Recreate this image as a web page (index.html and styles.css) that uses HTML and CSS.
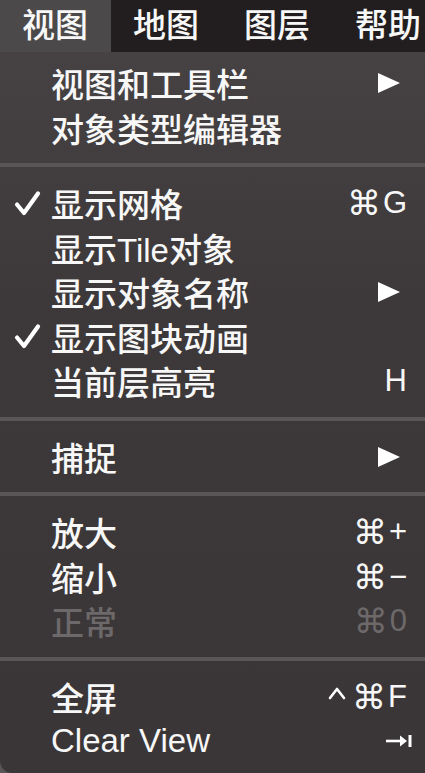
FILE: index.html
```html
<!DOCTYPE html>
<html lang="zh-CN">
<head>
<meta charset="utf-8">
<title>视图菜单</title>
<link rel="stylesheet" href="styles.css">
</head>
<body>
<div class="screen">
  <nav class="menubar">
    <div class="bar-item active">视图</div>
    <div class="bar-item">地图</div>
    <div class="bar-item">图层</div>
    <div class="bar-item">帮助</div>
  </nav>
  <div class="menu">
    <div class="row"><span class="check"></span><span class="label">视图和工具栏</span><span class="key"><svg class="arrow" width="22" height="20" viewBox="0 0 22 20"><polygon points="0,0 22,10 0,20" fill="#fff"/></svg></span></div>
    <div class="row"><span class="check"></span><span class="label">对象类型编辑器</span><span class="key"></span></div>
    <div class="sep"></div>
    <div class="row"><span class="check"><svg width="27" height="27" viewBox="0 0 27 27"><path d="M3 14.5 L10 23 L24 3.5" fill="none" stroke="#fff" stroke-width="4.2" stroke-linecap="round" stroke-linejoin="round"/></svg></span><span class="label">显示网格</span><span class="key"><span class="cmd">⌘</span>G</span></div>
    <div class="row"><span class="check"></span><span class="label">显示Tile对象</span><span class="key"></span></div>
    <div class="row"><span class="check"></span><span class="label">显示对象名称</span><span class="key"><svg class="arrow" width="22" height="20" viewBox="0 0 22 20"><polygon points="0,0 22,10 0,20" fill="#fff"/></svg></span></div>
    <div class="row"><span class="check"><svg width="27" height="27" viewBox="0 0 27 27"><path d="M3 14.5 L10 23 L24 3.5" fill="none" stroke="#fff" stroke-width="4.2" stroke-linecap="round" stroke-linejoin="round"/></svg></span><span class="label">显示图块动画</span><span class="key"></span></div>
    <div class="row"><span class="check"></span><span class="label">当前层高亮</span><span class="key">H</span></div>
    <div class="sep"></div>
    <div class="row"><span class="check"></span><span class="label">捕捉</span><span class="key"><svg class="arrow" width="22" height="20" viewBox="0 0 22 20"><polygon points="0,0 22,10 0,20" fill="#fff"/></svg></span></div>
    <div class="sep"></div>
    <div class="row"><span class="check"></span><span class="label">放大</span><span class="key"><span class="cmd">⌘</span>+</span></div>
    <div class="row"><span class="check"></span><span class="label">缩小</span><span class="key"><span class="cmd">⌘</span>−</span></div>
    <div class="row disabled"><span class="check"></span><span class="label">正常</span><span class="key"><span class="cmd">⌘</span>0</span></div>
    <div class="sep"></div>
    <div class="row"><span class="check"></span><span class="label">全屏</span><span class="key"><svg class="ctrl" width="18" height="14" viewBox="0 0 18 14"><path d="M2 12 L9 3 L16 12" fill="none" stroke="#fff" stroke-width="2.6" stroke-linecap="round" stroke-linejoin="round"/></svg><span class="cmd">⌘</span>F</span></div>
    <div class="row"><span class="check"></span><span class="label">Clear View</span><span class="key"><svg class="tab" width="27" height="14" viewBox="0 0 27 14"><path d="M0 7 H18" stroke="#fff" stroke-width="2.6"/><polygon points="14,1.5 21,7 14,12.5" fill="#fff"/><rect x="22.5" y="1" width="3" height="12" fill="#fff"/></svg></span></div>
  </div>
</div>
</body>
</html>
```
FILE: styles.css
```css
html, body {
  margin: 0;
  padding: 0;
}
body {
  background: #5a5657;
  font-family: "Liberation Sans", "DejaVu Sans", "Noto Sans CJK SC", sans-serif;
  color: #f7f7f7;
  width: 425px;
  height: 773px;
  overflow: hidden;
}
.screen {
  display: flex;
  flex-direction: column;
  height: 773px;
}
.menubar {
  display: flex;
  height: 52px;
  background: #221e1f;
  flex: none;
}
.bar-item {
  font-size: 33px;
  font-weight: 500;
  line-height: 52px;
  padding: 0 24px 0 22px;
  width: 65px;
  white-space: nowrap;
}
.bar-item.active {
  background: #4c494a;
}
.menu {
  flex: 1;
  background: linear-gradient(180deg, #464243 0%, #3d393a 35%, #3a3637 100%);
  border-bottom-left-radius: 12px;
  padding-top: 9px;
  display: flex;
  flex-direction: column;
}
.row {
  height: 44.5px;
  display: flex;
  align-items: center;
  font-size: 33px;
  font-weight: 500;
  padding-right: 18px;
}
.check {
  width: 51px;
  flex: none;
  display: flex;
  justify-content: flex-start;
  padding-left: 14px;
  box-sizing: border-box;
}
.check svg {
  display: block;
}
.label {
  flex: 1;
  white-space: nowrap;
}
.key {
  display: flex;
  align-items: center;
  font-size: 31px;
  font-weight: 400;
  white-space: nowrap;
}
.cmd {
  font-family: "DejaVu Sans", sans-serif;
  font-size: 34px;
  line-height: 1;
  margin-right: 2px;
}
.ctrl {
  display: block;
  margin-right: 6px;
  margin-top: -8px;
}
.arrow {
  display: block;
  margin-right: 7px;
}
.tab {
  display: block;
  margin-right: -6px;
}
.disabled {
  color: #6d696a;
}
.disabled .cmd {
  color: #6d696a;
}
.sep {
  height: 4px;
  background: #5a5657;
  margin: 13px 0 14px;
  flex: none;
}
```
